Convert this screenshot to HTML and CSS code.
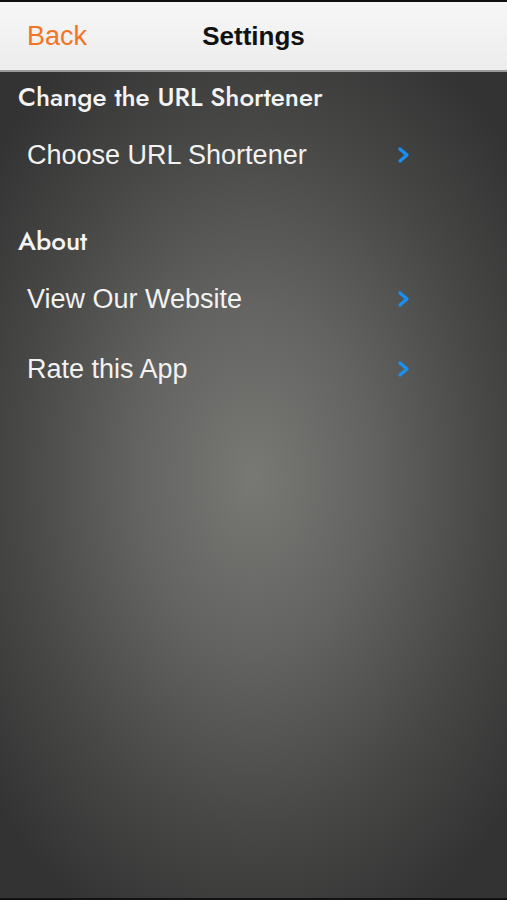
FILE: index.html
```html
<!DOCTYPE html>
<html lang="en">

<head>
    <meta charset="UTF-8">
    <meta name="viewport" content="width=device-width, initial-scale=1.0">
    <title>Settings</title>
    <link rel="stylesheet" href="styles.css">
</head>

<body>
    <div class="screen">
        <div class="navbar">
            <a class="nav-back" href="#">Back</a>
            <div class="nav-title">Settings</div>
        </div>

        <div class="content">
            <h2 class="group-title">Change the URL Shortener</h2>
            <ul class="rows">
                <li class="row">
                    <span>Choose URL Shortener</span>
                    <svg class="chevron" viewBox="0 0 14 18" width="14" height="18">
                        <path d="M3 3 L10 9 L3 15" fill="none" stroke="#1a8ff0" stroke-width="3.4" stroke-linecap="round" stroke-linejoin="round" />
                    </svg>
                </li>
            </ul>

            <h2 class="group-title about">About</h2>
            <ul class="rows">
                <li class="row">
                    <span>View Our Website</span>
                    <svg class="chevron" viewBox="0 0 14 18" width="14" height="18">
                        <path d="M3 3 L10 9 L3 15" fill="none" stroke="#1a8ff0" stroke-width="3.4" stroke-linecap="round" stroke-linejoin="round" />
                    </svg>
                </li>
                <li class="row">
                    <span>Rate this App</span>
                    <svg class="chevron" viewBox="0 0 14 18" width="14" height="18">
                        <path d="M3 3 L10 9 L3 15" fill="none" stroke="#1a8ff0" stroke-width="3.4" stroke-linecap="round" stroke-linejoin="round" />
                    </svg>
                </li>
            </ul>
        </div>
    </div>
</body>

</html>
```

FILE: styles.css
```css
/* page */
html,
body {
    margin: 0;
    padding: 0;
    height: 100%;
    background: #111;
}

.screen {
    height: 900px;
    box-sizing: border-box;
    border-top: 2px solid #111;
    border-bottom: 2px solid #111;
    display: flex;
    flex-direction: column;
    font-family: "Liberation Sans", Arial, sans-serif;
}

/* nav bar */
.navbar {
    height: 68px;
    flex-shrink: 0;
    display: flex;
    align-items: center;
    position: relative;
    background: linear-gradient(#f7f7f7, #ececec);
    border-bottom: 2px solid #9a9a9a;
}

.nav-back {
    margin-left: 27px;
    color: #f27424;
    font-size: 27px;
    text-decoration: none;
}

.nav-title {
    position: absolute;
    left: 0;
    right: 0;
    text-align: center;
    font-size: 26px;
    font-weight: bold;
    color: #111;
    pointer-events: none;
}

/* list area */
.content {
    flex: 1;
    background: radial-gradient(ellipse 340px 500px at 50% 49%, #787875 0%, #636361 35%, #474746 70%, #333333 100%);
    padding-top: 7px;
}

.group-title {
    margin: 0 0 5px;
    padding-left: 18px;
    height: 36px;
    line-height: 36px;
    font-family: "Jost", "Futura", "Lato", sans-serif;
    font-weight: 500;
    font-size: 26px;
    letter-spacing: 0;
    color: #f4f4f4;
}

.group-title.about {
    margin-top: 33px;
}

.rows {
    list-style: none;
    margin: 0;
    padding: 0;
}

.row {
    height: 70px;
    display: flex;
    align-items: center;
    justify-content: space-between;
    padding-left: 27px;
    padding-right: 96px;
    font-size: 27px;
    color: #f2f2f2;
}

.chevron {
    display: block;
}
```
